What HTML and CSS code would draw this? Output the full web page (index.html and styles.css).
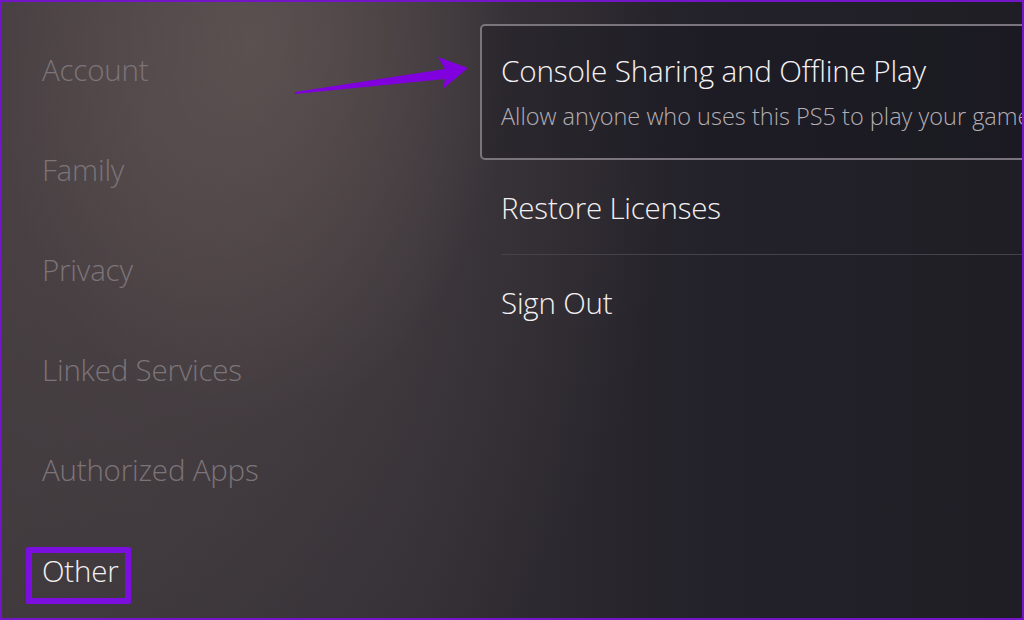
FILE: index.html
```html
<!DOCTYPE html>
<html lang="en">
<head>
<meta charset="utf-8">
<title>Account Settings - Other</title>
<link rel="stylesheet" href="styles.css">
</head>
<body>
<div class="screen">
  <nav class="side">
    <div class="side-item">Account</div>
    <div class="side-item">Family</div>
    <div class="side-item">Privacy</div>
    <div class="side-item">Linked Services</div>
    <div class="side-item">Authorized Apps</div>
    <div class="side-item active"><span class="hl">Other</span></div>
  </nav>
  <main class="content">
    <div class="card">
      <div class="card-title">Console Sharing and Offline Play</div>
      <div class="card-sub">Allow anyone who uses this PS5 to play your games</div>
    </div>
    <div class="row">Restore Licenses</div>
    <div class="row">Sign Out</div>
  </main>
  <svg class="arrow" width="190" height="50" viewBox="0 0 190 50">
    <polygon points="3,45 153,22 146,10 176,21 151,42 153,32 3,47" fill="#8000de"/>
  </svg>
</div>
</body>
</html>
```
FILE: styles.css
```css
html, body {
  margin: 0;
  padding: 0;
  background: #1f1e25;
}
.screen {
  position: relative;
  width: 1024px;
  height: 620px;
  box-sizing: border-box;
  border: 2px solid #7216c8;
  overflow: hidden;
  display: flex;
  font-family: "Open Sans", "Noto Sans", sans-serif;
  font-weight: 300;
  background:
    radial-gradient(ellipse 260px 380px at 250px 40px, rgba(100,88,86,0.7), rgba(100,88,86,0) 100%),
    radial-gradient(ellipse 520px 700px at 150px 120px, rgba(80,70,72,0.85), rgba(80,70,72,0) 100%),
    linear-gradient(90deg, #3c373b 0%, #332f35 40%, #232129 70%, #1f1e25 100%);
}
.side {
  width: 478px;
  flex: none;
  padding: 48px 0 0 40px;
  box-sizing: border-box;
  display: flex;
  flex-direction: column;
}
.side-item {
  height: 100px;
  flex: none;
  font-size: 29.5px;
  line-height: 40px;
  color: #7c7479;
  letter-spacing: -0.2px;
}
.side-item.active {
  color: #f2f0f2;
}
.hl {
  display: inline-block;
  margin-left: -16px;
  margin-top: -3px;
  padding: 0 6px 9px 10px;
  border: 6px solid #7a0fe0;
  border-radius: 2px;
  line-height: 36px;
}
.content {
  flex: 1;
  padding-top: 22px;
  display: flex;
  flex-direction: column;
}
.card {
  width: 620px;
  height: 136px;
  box-sizing: border-box;
  border: 2px solid #7a757d;
  border-radius: 5px;
  background: rgba(20,20,28,0.35);
  padding: 25px 0 0 19px;
  white-space: nowrap;
}
.card-title {
  font-size: 29.7px;
  line-height: 40px;
  color: #f4f2f4;
  letter-spacing: -0.2px;
}
.card-sub {
  margin-top: 9px;
  font-size: 23.5px;
  line-height: 32px;
  color: #b3aeb4;
}
.row {
  margin-left: 21px;
  height: 94px;
  display: flex;
  align-items: center;
  font-size: 29.5px;
  color: #f2f0f2;
  letter-spacing: -0.2px;
}
.row + .row {
  border-top: 1px solid #46424b;
}
.arrow {
  position: absolute;
  left: 290px;
  top: 45px;
}
```
